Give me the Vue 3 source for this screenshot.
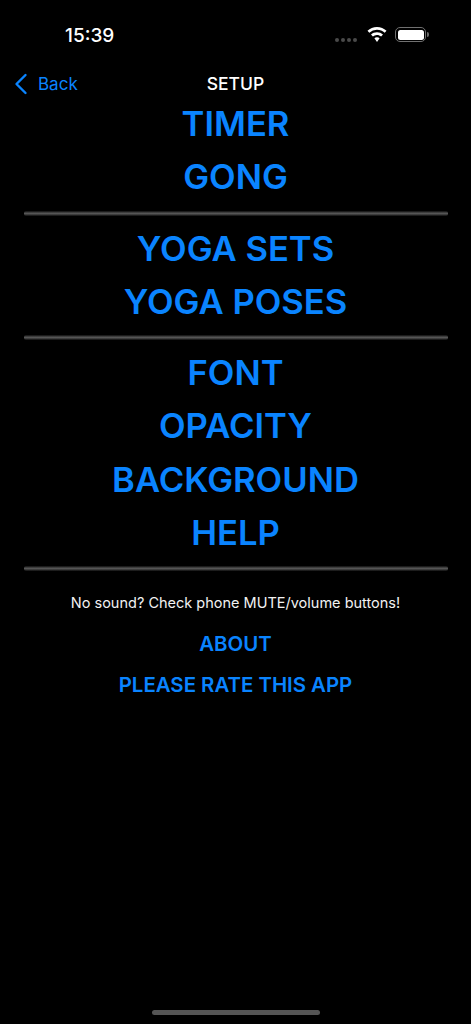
<template>
  <div class="screen">
    <div class="status-bar">
      <span class="clock">15:39</span>
      <div class="status-icons">
        <div class="signal">
          <i v-for="n in 4" :key="n"></i>
        </div>
        <svg class="wifi" viewBox="0 0 20 15" fill="#fff">
          <path d="M10 0C6.300 0 3 1.400.5 3.800l1.800 1.900A11.200 11.200 0 0 1 10 2.700c3 0 5.700 1.100 7.700 3l1.800-1.900A13.800 13.800 0 0 0 10 0z"/>
          <path d="M10 5.200c-2.300 0-4.400.9-6 2.300l1.900 1.900A6 6 0 0 1 10 7.900c1.600 0 3 .6 4.100 1.500L16 7.500a8.800 8.800 0 0 0-6-2.300z"/>
          <path d="M10 10.300c-1 0-1.900.4-2.600 1L10 15l2.600-3.700c-.7-.6-1.600-1-2.600-1z"/>
        </svg>
        <div class="battery">
          <div class="battery-fill"></div>
          <div class="battery-cap"></div>
        </div>
      </div>
    </div>

    <div class="nav-bar">
      <div class="back">
        <svg viewBox="0 0 14 22" fill="none" stroke="#0a84ff" stroke-width="2.4" stroke-linecap="round" stroke-linejoin="round">
          <path d="M11.500 2 2.500 11l9 9"/>
        </svg>
        <span>Back</span>
      </div>
      <span class="nav-title">SETUP</span>
    </div>

    <template v-for="(group, i) in groups" :key="i">
      <div class="menu-group">
        <a v-for="item in group" :key="item" class="menu-item">{{ item }}</a>
      </div>
      <div class="divider"></div>
    </template>

    <p class="notice">No sound? Check phone MUTE/volume buttons!</p>
    <a class="small-link about">ABOUT</a>
    <a class="small-link rate">PLEASE RATE THIS APP</a>

    <div class="home-indicator"></div>
  </div>
</template>

<script setup>
const groups = [
  ['TIMER', 'GONG'],
  ['YOGA SETS', 'YOGA POSES'],
  ['FONT', 'OPACITY', 'BACKGROUND', 'HELP']
]
</script>

<style>
html, body {
  margin: 0;
  background: #000;
}
</style>

<style scoped>
.screen {
  position: relative;
  width: 471px;
  height: 1024px;
  overflow: hidden;
  background: #000;
  color: #fff;
  font-family: Inter, "Liberation Sans", sans-serif;
  display: flex;
  flex-direction: column;
  align-items: center;
}

.status-bar {
  width: 100%;
  height: 70px;
  box-sizing: border-box;
  display: flex;
  justify-content: space-between;
  align-items: flex-start;
  padding: 25px 42px 0 65px;
}

.clock {
  font-size: 19px;
  font-weight: 500;
  line-height: 22px;
}

.status-icons {
  display: flex;
  align-items: flex-start;
  height: 22px;
}

.signal {
  display: flex;
  gap: 2px;
  margin: 13px 10px 0 0;
}

.signal i {
  display: block;
  width: 4px;
  height: 4px;
  border-radius: 50%;
  background: #4a4a4a;
}

.wifi {
  width: 20px;
  height: 15px;
  margin: 2px 8px 0 0;
}

.battery {
  display: flex;
  align-items: center;
  gap: 1px;
  margin-top: 2px;
}

.battery-fill {
  box-sizing: border-box;
  width: 31px;
  height: 15px;
  border: 1px solid #707070;
  border-radius: 5px;
  padding: 1.500px;
  background: #fff;
  background-clip: content-box;
}

.battery-cap {
  width: 2px;
  height: 5px;
  background: #6a6a6a;
  border-radius: 0 2px 2px 0;
}

.nav-bar {
  position: relative;
  width: 100%;
  height: 27px;
  display: flex;
  justify-content: center;
  align-items: center;
}

.back {
  position: absolute;
  left: 14px;
  top: 3px;
  display: flex;
  align-items: center;
  gap: 10px;
  color: #0a84ff;
  font-size: 17px;
  line-height: 22px;
}

.back svg {
  width: 14px;
  height: 22px;
}

.nav-title {
  font-size: 17.500px;
  font-weight: 500;
  line-height: 28px;
}

.menu-group {
  display: flex;
  flex-direction: column;
  align-items: center;
}

.menu-item {
  display: block;
  color: #0a84ff;
  font-size: 34.600px;
  font-weight: 600;
  line-height: 53.300px;
  height: 53.300px;
}

.divider {
  width: 424px;
  height: 5px;
  margin: 7px 0 6px;
  border-radius: 2px;
  background: linear-gradient(#0c0c0c, #555 45%, #555 55%, #0c0c0c);
}

.notice {
  margin: 15px 0 0;
  font-size: 14.500px;
  line-height: 22px;
  color: #f2f2f2;
}

.small-link {
  display: block;
  color: #0a84ff;
  font-size: 20.400px;
  font-weight: 600;
  line-height: 26px;
}

.about {
  margin-top: 17px;
}

.rate {
  margin-top: 15px;
}

.home-indicator {
  position: absolute;
  left: 152px;
  bottom: 9px;
  width: 168px;
  height: 5px;
  border-radius: 3px;
  background: #555;
}
</style>
